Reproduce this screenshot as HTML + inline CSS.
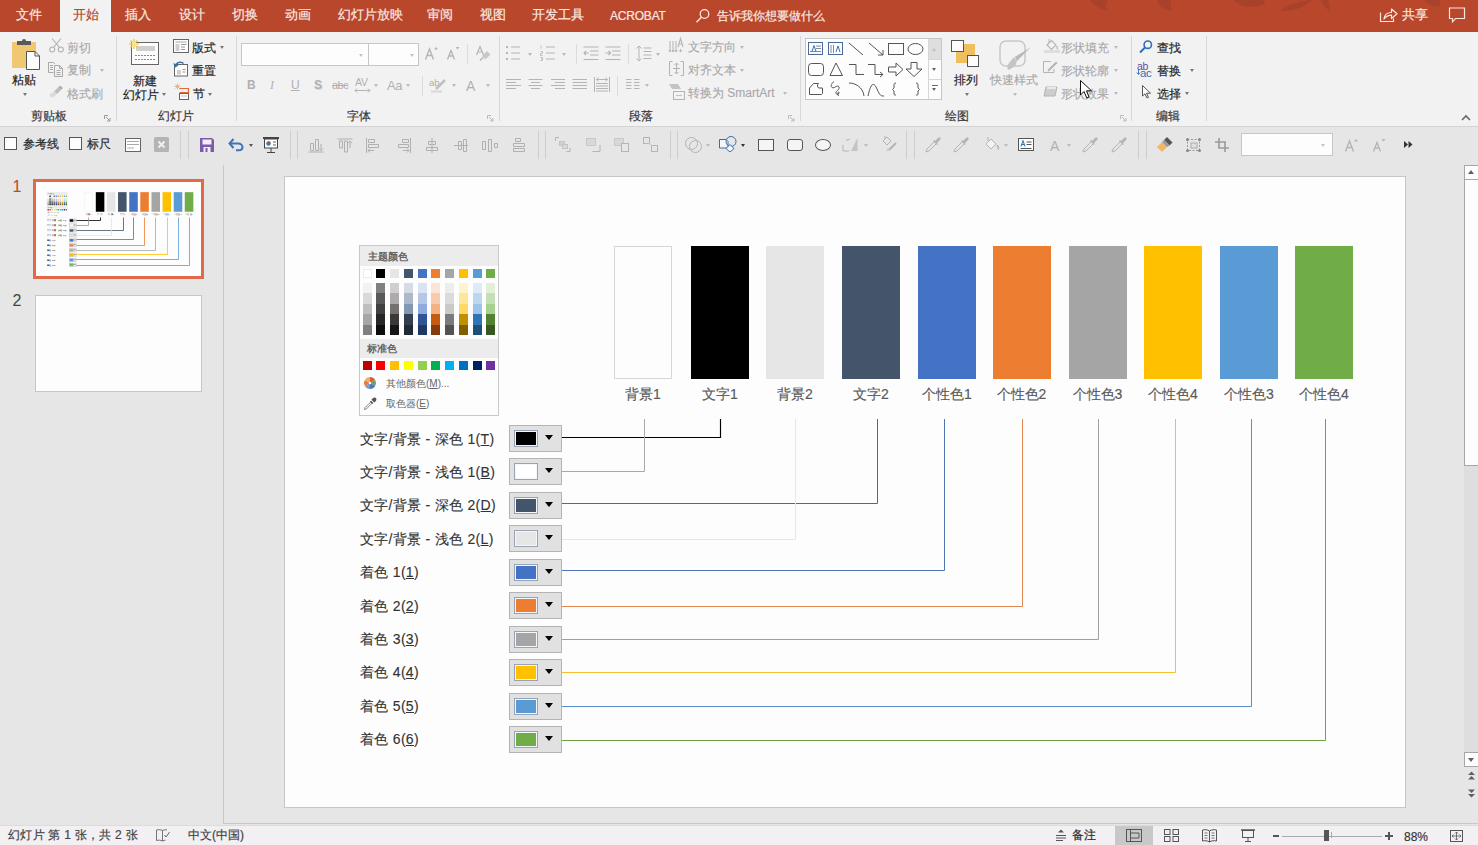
<!DOCTYPE html>
<html><head><meta charset="utf-8"><title>PowerPoint</title>
<style>
*{box-sizing:border-box;margin:0;padding:0}
html,body{width:1478px;height:845px;overflow:hidden;background:#e6e6e6;font-family:"Liberation Sans",sans-serif;color:#333}
.a{position:absolute}
.t{position:absolute;white-space:nowrap;line-height:1}
svg{position:absolute;overflow:visible}
.tab{position:absolute;top:8px;font-size:13px;color:#fbe7e1;line-height:14px;white-space:nowrap;-webkit-text-stroke:0.2px #fbe7e1}
.sep{position:absolute;width:1px;background:#d9d8d9}
.qsep{position:absolute;width:1px;background:#cfcfcf;top:131px;height:28px}
.lb{position:absolute;font-size:12px;color:#3a3a3a;line-height:1;white-space:nowrap;-webkit-text-stroke:0.2px #3a3a3a}
.rt{position:absolute;font-size:12px;color:#262626;line-height:1;white-space:nowrap;-webkit-text-stroke:0.2px #262626}
.dt{position:absolute;font-size:12px;color:#a8a8a8;line-height:1;white-space:nowrap;-webkit-text-stroke:0.15px #a8a8a8}
.dd{position:absolute;width:0;height:0;border-left:2.5px solid transparent;border-right:2.5px solid transparent;border-top:3px solid #777}
.ddg{position:absolute;width:0;height:0;border-left:2.5px solid transparent;border-right:2.5px solid transparent;border-top:3px solid #bbb}
</style></head><body>
<div class="a" style="left:0;top:0;width:1478px;height:32px;background:#b8472b"></div>
<svg style="left:1080px;top:0" width="380" height="32" viewBox="0 0 380 32">
<g fill="#a8422a">
<path d="M10 0 C14 5 20 9 28 11 C24 6 26 3 28 0Z"/>
<path d="M77 0 C78 5 82 9 92 11 C90 6 92 2 90 0Z"/>
<path d="M154 0 C158 6 170 9 185 4 L184 0Z"/>
<path d="M200 11 C210 3 222 1 232 0 C226 6 214 12 200 11Z"/>
<path d="M241 0 C243 5 247 9 250 12 C250 7 249 3 248 0Z"/>
<path d="M344 0 C350 6 356 8 360 6 L360 0Z"/>
</g></svg>
<div class="a" style="left:60px;top:0;width:51px;height:33px;background:#f3f2f3"></div>
<div class="tab" style="left:73px;color:#b5462a;-webkit-text-stroke-color:#b5462a">开始</div>
<div class="tab" style="left:16px">文件</div>
<div class="tab" style="left:125px">插入</div>
<div class="tab" style="left:179px">设计</div>
<div class="tab" style="left:232px">切换</div>
<div class="tab" style="left:285px">动画</div>
<div class="tab" style="left:338px">幻灯片放映</div>
<div class="tab" style="left:427px">审阅</div>
<div class="tab" style="left:480px">视图</div>
<div class="tab" style="left:532px">开发工具</div>
<div class="tab" style="left:610px;font-size:12px;top:9px;letter-spacing:-0.2px">ACROBAT</div>
<svg style="left:695px;top:8px" width="16" height="16" viewBox="0 0 16 16"><circle cx="9.5" cy="6" r="4.3" fill="none" stroke="#fbe7e1" stroke-width="1.3"/><path d="M6.6 9 L1.5 14.2" stroke="#fbe7e1" stroke-width="1.4"/></svg>
<div class="tab" style="left:717px;top:9px;font-size:12px">告诉我你想要做什么</div>
<svg style="left:1379px;top:6px" width="20" height="18" viewBox="0 0 20 18"><path d="M1.5 6.5 V15.5 H14.5 V12.5" fill="none" stroke="#fbe7e1" stroke-width="1.2"/><path d="M5 13 C5.5 8.5 8.5 6.5 12.5 6.5 V3 L18 7.8 L12.5 12.5 V9.2 C9.5 9.2 7 10.5 5 13Z" fill="none" stroke="#fbe7e1" stroke-width="1.2" stroke-linejoin="round"/></svg>
<div class="tab" style="left:1402px">共享</div>
<svg style="left:1448px;top:7px" width="18" height="17" viewBox="0 0 18 17"><path d="M1.5 1 H16.5 V11.5 H7.5 L4.5 14.8 V11.5 H1.5 Z" fill="none" stroke="#fbe7e1" stroke-width="1.2"/></svg>

<div class="a" style="left:0;top:32px;width:1478px;height:94px;background:#f3f2f3"></div>
<div class="a" style="left:0;top:126px;width:1478px;height:1px;background:#d4d4d4"></div>
<!-- separators -->
<div class="sep" style="left:116px;top:36px;height:85px"></div>
<div class="sep" style="left:236px;top:36px;height:85px"></div>
<div class="sep" style="left:499px;top:36px;height:85px"></div>
<div class="sep" style="left:800px;top:36px;height:85px"></div>
<div class="sep" style="left:1131px;top:36px;height:85px"></div>
<div class="sep" style="left:1206px;top:36px;height:85px"></div>
<!-- launchers -->
<svg style="left:104px;top:115px" width="7" height="7" viewBox="0 0 7 7"><path d="M0.5 0.5 H4 M0.5 0.5 V4 M2 2 L6 6 M6 3 V6 H3" fill="none" stroke="#999" stroke-width="1"/></svg>
<svg style="left:487px;top:115px" width="7" height="7" viewBox="0 0 7 7"><path d="M0.5 0.5 H4 M0.5 0.5 V4 M2 2 L6 6 M6 3 V6 H3" fill="none" stroke="#bbb" stroke-width="1"/></svg>
<svg style="left:788px;top:115px" width="7" height="7" viewBox="0 0 7 7"><path d="M0.5 0.5 H4 M0.5 0.5 V4 M2 2 L6 6 M6 3 V6 H3" fill="none" stroke="#bbb" stroke-width="1"/></svg>
<svg style="left:1120px;top:115px" width="7" height="7" viewBox="0 0 7 7"><path d="M0.5 0.5 H4 M0.5 0.5 V4 M2 2 L6 6 M6 3 V6 H3" fill="none" stroke="#bbb" stroke-width="1"/></svg>
<!-- group labels -->
<div class="lb" style="left:31px;top:110px">剪贴板</div>
<div class="lb" style="left:158px;top:110px">幻灯片</div>
<div class="lb" style="left:347px;top:110px">字体</div>
<div class="lb" style="left:629px;top:110px">段落</div>
<div class="lb" style="left:945px;top:110px">绘图</div>
<div class="lb" style="left:1156px;top:110px">编辑</div>
<svg style="left:1461px;top:114px" width="10" height="7" viewBox="0 0 10 7"><path d="M1 6 L5 2 L9 6" fill="none" stroke="#666" stroke-width="1.6"/></svg>

<!-- CLIPBOARD -->
<svg style="left:12px;top:39px" width="28" height="32" viewBox="0 0 28 32">
<rect x="0" y="3" width="24" height="26" fill="#f0c872"/>
<path d="M5 2 H19 V6 H5 Z" fill="#5a5a5a"/><circle cx="12" cy="2" r="2" fill="#5a5a5a"/>
<path d="M14.5 12.5 H23 L27.5 17 V30.5 H14.5 Z" fill="#fdfdfd" stroke="#555" stroke-width="1"/>
<path d="M23 12.5 V17 H27.5" fill="none" stroke="#555" stroke-width="1"/>
</svg>
<div class="rt" style="left:12px;top:74px;color:#222">粘贴</div>
<div class="dd" style="left:23px;top:93px"></div>
<svg style="left:49px;top:38px" width="15" height="15" viewBox="0 0 15 15"><g fill="none" stroke="#b0b0b0" stroke-width="1.1"><circle cx="3.2" cy="11.5" r="2.5"/><circle cx="11.8" cy="11.5" r="2.5"/><path d="M4.5 9.5 L12 0.5 M10.5 9.5 L3 0.5"/></g></svg>
<div class="dt" style="left:67px;top:42px">剪切</div>
<svg style="left:48px;top:62px" width="16" height="15" viewBox="0 0 16 15"><g fill="none" stroke="#a8a8a8" stroke-width="1"><path d="M0.5 0.5 H5.5 L7 2 M0.5 0.5 V10.5 H5.5"/><path d="M2 3.5 H5 M2 5.5 H5 M2 7.5 H5"/><path d="M6.5 3.5 H11.5 L14.5 6.5 V14.5 H6.5 Z"/><path d="M11.5 3.5 V6.5 H14.5 M8.5 8.5 H12.5 M8.5 10.5 H12.5 M8.5 12.5 H12.5"/></g></svg>
<div class="dt" style="left:67px;top:64px">复制</div>
<div class="ddg" style="left:100px;top:69px"></div>
<svg style="left:49px;top:85px" width="15" height="13" viewBox="0 0 15 13"><path d="M11 0.5 L14 3 L12 5 L9 2.5 Z" fill="#b0b0b0"/><path d="M9 2.5 L12 5 L8 9 L5 6.5 Z" fill="#bdbdbd"/><path d="M5 6.5 L8 9 L4 12.5 C2 12.5 0.5 11 0.5 9.5 Z" fill="#dadada"/></svg>
<div class="dt" style="left:67px;top:88px">格式刷</div>

<!-- SLIDES -->
<svg style="left:128px;top:38px" width="33" height="28" viewBox="0 0 33 28">
<rect x="3.5" y="4.5" width="27" height="22" fill="#fdfdfd" stroke="#666" stroke-width="1"/>
<rect x="8" y="8" width="19" height="5" fill="#d0d0d0"/>
<path d="M7 17.5 H27 M7 21.5 H27" stroke="#888" stroke-width="1" stroke-dasharray="2 1"/>
<g stroke="#f0c040" stroke-width="1.2"><path d="M6 1 V11 M1 6 H11 M2.5 2.5 L9.5 9.5 M9.5 2.5 L2.5 9.5"/></g>
<circle cx="6" cy="6" r="2.5" fill="#fbe38a"/>
</svg>
<div class="rt" style="left:133px;top:75px">新建</div>
<div class="rt" style="left:123px;top:89px">幻灯片</div>
<div class="dd" style="left:162px;top:93px"></div>
<svg style="left:173px;top:39px" width="17" height="14" viewBox="0 0 17 14"><rect x="0.5" y="0.5" width="15" height="13" fill="#fdfdfd" stroke="#666"/><path d="M2.5 3 H13.5" stroke="#c4c4c4" stroke-width="1.5"/><rect x="2.5" y="5" width="4" height="7" fill="#cfcfcf"/><path d="M8 5.5 H13.5 M8 8 H12 M8 10.5 H12" stroke="#999"/></svg>
<div class="rt" style="left:192px;top:42px">版式</div>
<div class="dd" style="left:220px;top:46px"></div>
<svg style="left:173px;top:61px" width="17" height="16" viewBox="0 0 17 16"><rect x="1.5" y="3.5" width="13" height="11.5" fill="#fdfdfd" stroke="#666"/><rect x="4" y="9" width="4" height="4.5" fill="#cfcfcf"/><path d="M9.5 8.5 H12.5 M9.5 11 H12.5" stroke="#999"/><path d="M10.5 2.5 C8.5 0.5 5 0.8 3 3.5" fill="none" stroke="#3a6ea8" stroke-width="1.6"/><path d="M0.5 2 L1.5 7 L5.5 4.5 Z" fill="#3a6ea8"/></svg>
<div class="rt" style="left:192px;top:65px">重置</div>
<svg style="left:174px;top:83px" width="16" height="17" viewBox="0 0 16 17"><path d="M3.5 0.5 V6.5 M0.5 3.5 H6.5 M1.5 1.5 L5.5 5.5 M5.5 1.5 L1.5 5.5" stroke="#f0b070" stroke-width="0.9"/><path d="M5.5 5.5 H14.5 V9.5 H5.5" fill="none" stroke="#e06a38" stroke-width="1.2"/><rect x="5.5" y="10.5" width="9" height="6" fill="#fdfdfd" stroke="#666"/><path d="M7 13 H13" stroke="#c8c8c8"/></svg>
<div class="rt" style="left:193px;top:88px">节</div>
<div class="dd" style="left:208px;top:93px"></div>

<!-- FONT -->
<div class="a" style="left:241px;top:43px;width:128px;height:23px;background:#fdfdfd;border:1px solid #c6c6c6"></div>
<div class="a" style="left:368px;top:43px;width:51px;height:23px;background:#fdfdfd;border:1px solid #c6c6c6"></div>
<div class="ddg" style="left:359px;top:54px;border-top-color:#c4c4c4"></div>
<div class="ddg" style="left:410px;top:54px;border-top-color:#c4c4c4"></div>
<svg style="left:425px;top:46px" width="14" height="14" viewBox="0 0 14 14"><path d="M0.5 13.5 L4.5 3 L8.5 13.5 M2 9.5 H7" fill="none" stroke="#b4b4b4" stroke-width="1.4"/><path d="M9 3.5 L11 1 L13 3.5 Z" fill="#b4b4b4"/></svg>
<svg style="left:447px;top:46px" width="14" height="14" viewBox="0 0 14 14"><path d="M0.5 13.5 L4 4.5 L7.5 13.5 M2 10 H6" fill="none" stroke="#b4b4b4" stroke-width="1.3"/><path d="M8.5 1 L12.5 1 L10.5 3.5 Z" fill="#b4b4b4"/></svg>
<div class="sep" style="left:467px;top:44px;height:20px;background:#dcdcdc"></div>
<svg style="left:476px;top:46px" width="15" height="15" viewBox="0 0 15 15"><path d="M0.5 9 L4 0.5 L7.5 9 M1.8 6 H6.2" fill="none" stroke="#b4b4b4" stroke-width="1.2"/><path d="M6 10 L11 5 L14.5 8.5 L9.5 13.5 Z" fill="#c8c8c8"/><path d="M4 14.5 L7 11.5" stroke="#b4b4b4" stroke-width="1.5"/></svg>
<div class="t" style="left:247px;top:79px;font-size:12px;font-weight:bold;color:#b0b0b0">B</div>
<div class="t" style="left:270px;top:79px;font-size:12px;font-style:italic;color:#b0b0b0;font-family:'Liberation Serif',serif">I</div>
<div class="t" style="left:291px;top:79px;font-size:12px;color:#b0b0b0;text-decoration:underline">U</div>
<div class="t" style="left:314px;top:79px;font-size:12px;font-weight:bold;color:#b0b0b0;text-shadow:1px 1px 0 #d8d8d8">S</div>
<div class="t" style="left:332px;top:80px;font-size:11px;color:#b0b0b0;text-decoration:line-through;letter-spacing:-0.5px">abc</div>
<div class="t" style="left:355px;top:77px;font-size:10.5px;color:#b0b0b0;letter-spacing:-0.3px">AV</div>
<svg style="left:354px;top:88px" width="17" height="5" viewBox="0 0 17 5"><path d="M1 2.5 H16 M3 0.5 L1 2.5 L3 4.5 M14 0.5 L16 2.5 L14 4.5" fill="none" stroke="#b4b4b4" stroke-width="1"/></svg>
<div class="ddg" style="left:374px;top:84px"></div>
<div class="t" style="left:387px;top:79px;font-size:13px;color:#b0b0b0;letter-spacing:-0.3px">Aa</div>
<div class="ddg" style="left:406px;top:84px"></div>
<div class="sep" style="left:422px;top:76px;height:20px;background:#dcdcdc"></div>
<div class="t" style="left:429px;top:78px;font-size:9.5px;color:#b0b0b0">ab</div>
<svg style="left:430px;top:77px" width="17" height="16" viewBox="0 0 17 16"><path d="M6 12 L15 3" stroke="#c0c0c0" stroke-width="2.5"/><path d="M1 14.5 H12" stroke="#d8d8d8" stroke-width="2"/></svg>
<div class="ddg" style="left:452px;top:84px"></div>
<div class="t" style="left:466px;top:79px;font-size:14px;color:#b0b0b0">A</div>
<div class="ddg" style="left:486px;top:84px"></div>

<!-- PARAGRAPH -->
<svg style="left:506px;top:45px" width="16" height="16" viewBox="0 0 16 16"><g fill="#b4b4b4"><rect x="0" y="1" width="2" height="2"/><rect x="0" y="7" width="2" height="2"/><rect x="0" y="13" width="2" height="2"/></g><path d="M5 2 H14 M5 8 H14 M5 14 H14" stroke="#b4b4b4" stroke-width="1"/></svg>
<div class="ddg" style="left:528px;top:53px"></div>
<svg style="left:540px;top:45px" width="16" height="16" viewBox="0 0 16 16"><path d="M6 2 H15 M6 8 H15 M6 14 H15" stroke="#b4b4b4" stroke-width="1"/><path d="M1 0.5 V3.5 M0.5 6.5 H2.5 V8.5 H0.5 V10.5 H2.5 M0.5 12.5 H2.5 V15.5 H0.5 M1 14 H2.5" fill="none" stroke="#b4b4b4" stroke-width="0.8"/></svg>
<div class="ddg" style="left:562px;top:53px"></div>
<div class="sep" style="left:576px;top:44px;height:20px;background:#dcdcdc"></div>
<svg style="left:583px;top:46px" width="16" height="15" viewBox="0 0 16 15"><path d="M0.5 1 H15.5 M7 5 H15.5 M7 9 H15.5 M0.5 13.5 H15.5 M1 7 H6 M3 5 L1 7 L3 9" fill="none" stroke="#b4b4b4" stroke-width="1.1"/></svg>
<svg style="left:605px;top:46px" width="16" height="15" viewBox="0 0 16 15"><path d="M0.5 1 H15.5 M7 5 H15.5 M7 9 H15.5 M0.5 13.5 H15.5 M0.5 7 H5.5 M3.5 5 L5.5 7 L3.5 9" fill="none" stroke="#b4b4b4" stroke-width="1.1"/></svg>
<div class="sep" style="left:628px;top:44px;height:20px;background:#dcdcdc"></div>
<svg style="left:636px;top:45px" width="16" height="17" viewBox="0 0 16 17"><path d="M3 1 V16 M0.5 3.5 L3 1 L5.5 3.5 M0.5 13.5 L3 16 L5.5 13.5 M7.5 3 H15.5 M7.5 6.5 H15.5 M7.5 10 H15.5 M7.5 13.5 H15.5" fill="none" stroke="#b4b4b4" stroke-width="1"/></svg>
<div class="ddg" style="left:656px;top:53px"></div>
<svg style="left:669px;top:38px" width="15" height="15" viewBox="0 0 15 15"><path d="M1 3 V14 M4 3 V14 M7 3 V14 M0 12 L1 14 L2 12 M3 12 L4 14 L5 12 M6 12 L7 14 L8 12" fill="none" stroke="#b4b4b4" stroke-width="1"/><path d="M9 9 L11.5 0.5 L14 9 M10 6 H13" fill="none" stroke="#b4b4b4" stroke-width="1.1"/><path d="M11.5 11 V14 M10 12.5 L11.5 14 L13 12.5" fill="none" stroke="#b4b4b4"/></svg>
<div class="dt" style="left:688px;top:41px">文字方向</div>
<div class="ddg" style="left:740px;top:46px"></div>
<svg style="left:669px;top:61px" width="15" height="15" viewBox="0 0 15 15"><path d="M3.5 0.5 H0.5 V14.5 H3.5 M11.5 0.5 H14.5 V14.5 H11.5 M7.5 2 V13 M5.5 4 L7.5 2 L9.5 4 M5.5 11 L7.5 13 L9.5 11 M4 7.5 H11" fill="none" stroke="#b4b4b4" stroke-width="1"/></svg>
<div class="dt" style="left:688px;top:64px">对齐文本</div>
<div class="ddg" style="left:740px;top:69px"></div>
<svg style="left:669px;top:84px" width="16" height="16" viewBox="0 0 16 16"><path d="M0 0 H9 L12 5 H3 Z" fill="#c4c4c4"/><rect x="4.5" y="7.5" width="11" height="8" fill="#f3f2f3" stroke="#b4b4b4"/><path d="M7 11.5 H13" stroke="#c4c4c4"/></svg>
<div class="dt" style="left:688px;top:87px">转换为 SmartArt</div>
<div class="ddg" style="left:783px;top:92px"></div>
<svg style="left:506px;top:79px" width="16" height="12" viewBox="0 0 16 12"><path d="M0 0.5 H15 M0 3.5 H10 M0 6.5 H15 M0 9.5 H10" stroke="#b4b4b4" stroke-width="1"/></svg>
<svg style="left:528px;top:79px" width="16" height="12" viewBox="0 0 16 12"><path d="M0.5 0.5 H14.5 M3 3.5 H12 M0.5 6.5 H14.5 M3 9.5 H12" stroke="#b4b4b4" stroke-width="1"/></svg>
<svg style="left:550px;top:79px" width="16" height="12" viewBox="0 0 16 12"><path d="M1 0.5 H15 M5 3.5 H15 M1 6.5 H15 M5 9.5 H15" stroke="#b4b4b4" stroke-width="1"/></svg>
<svg style="left:572px;top:79px" width="16" height="12" viewBox="0 0 16 12"><path d="M0.5 0.5 H15 M0.5 3.5 H15 M0.5 6.5 H15 M0.5 9.5 H15" stroke="#b4b4b4" stroke-width="1"/></svg>
<svg style="left:594px;top:77px" width="16" height="15" viewBox="0 0 16 15"><path d="M0.5 0 V15 M15.5 0 V15 M2.5 2.5 H13.5 M4.5 0.5 L2.5 2.5 L4.5 4.5 M11.5 0.5 L13.5 2.5 L11.5 4.5 M2 6.5 H14 M2 9 H14 M2 11.5 H14 M2 14 H14" fill="none" stroke="#b4b4b4" stroke-width="1"/></svg>
<div class="sep" style="left:617px;top:76px;height:20px;background:#dcdcdc"></div>
<svg style="left:626px;top:79px" width="14" height="12" viewBox="0 0 14 12"><path d="M0 0.5 H5.5 M0 3.5 H5.5 M0 6.5 H5.5 M0 9.5 H5.5 M8 0.5 H13.5 M8 3.5 H13.5 M8 6.5 H13.5 M8 9.5 H13.5" stroke="#b4b4b4" stroke-width="1"/></svg>
<div class="ddg" style="left:645px;top:84px"></div>

<!-- DRAWING -->
<div class="a" style="left:805px;top:38px;width:137px;height:62px;background:#fdfdfd;border:1px solid #c6c6c6"></div>
<div class="a" style="left:928px;top:39px;width:1px;height:60px;background:#d6d6d6"></div>
<div class="a" style="left:929px;top:39px;width:12px;height:20px;background:#dedede"></div>
<div class="a" style="left:929px;top:59px;width:12px;height:1px;background:#d6d6d6"></div>
<div class="a" style="left:929px;top:79px;width:12px;height:1px;background:#d6d6d6"></div>
<div class="a" style="left:932px;top:48px;width:0;height:0;border-left:2.5px solid transparent;border-right:2.5px solid transparent;border-bottom:3px solid #c0c0c0"></div>
<div class="dd" style="left:932px;top:68px;border-top-color:#666"></div>
<div class="a" style="left:932px;top:85px;width:6px;height:1px;background:#666"></div>
<div class="dd" style="left:932px;top:88px;border-top-color:#666"></div>
<svg style="left:808px;top:42px" width="118" height="55" viewBox="0 0 118 55">
<g fill="none" stroke="#555" stroke-width="1">
<rect x="0.5" y="0.5" width="14" height="12" stroke="#4a6a9a"/><path d="M8 4 H13 M8 6.5 H13 M2 9.5 H13" stroke="#7a8aa0"/>
<rect x="20.5" y="0.5" width="14" height="12" stroke="#4a6a9a"/><path d="M23 3 V11 M25.5 3 V11" stroke="#7a8aa0"/>
<path d="M41 1 L55 13"/>
<path d="M61 1 L75 13 M70 13 H75 V8"/>
<rect x="80.5" y="1.5" width="15" height="11"/>
<ellipse cx="107.5" cy="7" rx="7.5" ry="5.5"/>
<rect x="0.5" y="21.5" width="15" height="12" rx="3"/>
<path d="M22 33.5 L28 21 L34.5 33.5 Z"/>
<path d="M41 22.5 H48 V32.5 H56"/>
<path d="M60 22.5 H67 V32.5 H75 M72 30 L75 32.5 L72 35"/>
<path d="M80.5 25 H88 V21 L95 27.5 L88 34 V30 H80.5 Z"/>
<path d="M103 20.5 H109 V27 H114 L106 34.5 L98 27 H103 Z"/>
<path d="M1.5 52.5 V46 L5.5 41.5 H10.5 C9 43 9 45.5 11 46 H14.5 V51.5 L13.5 52.5 Z" stroke-linejoin="round"/>
<path d="M26 39.5 C24 41 22 44 24 45.5 C26 47 30 42 31 45 C32 48 27 49 28 51.5 C29 53 31.5 52 31 50.5 C30.5 49 29 51 30.5 54"/>
<path d="M41 41 C47 41 55 45 56 54"/>
<path d="M60 54 C63 40 66 40 69 47 C72 54 73 54 76 54"/>
<path d="M88 41 C86 41 86 42 86 44 V46 L84.5 47.5 L86 49 V51 C86 53 86 53 88 53"/>
<path d="M108 41 C110 41 110 42 110 44 V46 L111.5 47.5 L110 49 V51 C110 53 110 53 108 53"/>
</g>
<path d="M4 9.5 L6 3.5 L8 9.5" fill="none" stroke="#3a70b0" stroke-width="1"/>
<path d="M28 10 L30 4 L32 10" fill="none" stroke="#3a70b0" stroke-width="1"/>
</svg>
<svg style="left:951px;top:40px" width="29" height="28" viewBox="0 0 29 28"><rect x="5" y="4" width="19" height="19" fill="#f0c060"/><rect x="0.5" y="0.5" width="12" height="11" fill="#fdfdfd" stroke="#555"/><rect x="16.5" y="15.5" width="11" height="11" fill="#fdfdfd" stroke="#555"/></svg>
<div class="rt" style="left:954px;top:74px">排列</div>
<div class="dd" style="left:965px;top:93px"></div>
<svg style="left:999px;top:40px" width="33" height="32" viewBox="0 0 33 32"><rect x="1" y="1" width="25" height="25" rx="6" fill="none" stroke="#c8c8c8" stroke-width="1.5"/><path d="M31.5 7.5 L18 21 L14 18 Z" fill="#b8b8b8"/><path d="M18 21 L14 18 L10 23 C8 25 8 28 9 30 C12 29 15 27 16.5 25 Z" fill="#c4c4c4"/><path d="M17 19 L15.5 17.5" stroke="#e0e0e0" stroke-width="1.5"/></svg>
<div class="dt" style="left:990px;top:74px">快速样式</div>
<div class="ddg" style="left:1013px;top:93px"></div>
<svg style="left:1044px;top:38px" width="16" height="15" viewBox="0 0 16 15"><path d="M3 7 L7.5 2.5 L12 7 L7.5 11.5 Z" fill="none" stroke="#b4b4b4" stroke-width="1.1"/><path d="M5 1 V5" stroke="#b4b4b4"/><path d="M12.5 8 C13.5 9.5 14 10.5 13 11.5" stroke="#c4c4c4" stroke-width="1.5" fill="none"/><path d="M0 13.5 H16" stroke="#dedede" stroke-width="3"/></svg>
<div class="dt" style="left:1061px;top:42px">形状填充</div>
<div class="ddg" style="left:1114px;top:46px"></div>
<svg style="left:1043px;top:61px" width="15" height="12" viewBox="0 0 15 12"><path d="M8 0.5 H0.5 V11.5 H11 V8" fill="none" stroke="#b4b4b4" stroke-width="1"/><path d="M13.5 1 L6 8.5 L5 10 L6.5 9 L14 1.5" fill="none" stroke="#b4b4b4" stroke-width="1.3"/></svg>
<div class="dt" style="left:1061px;top:65px">形状轮廓</div>
<div class="ddg" style="left:1114px;top:69px"></div>
<svg style="left:1043px;top:86px" width="15" height="12" viewBox="0 0 15 12"><path d="M3 1 H14 L12 10 H1 Z" fill="#cdcdcd" stroke="#b4b4b4" stroke-linejoin="round"/><path d="M4 2 H13" stroke="#e8e8e8" stroke-width="2"/></svg>
<div class="dt" style="left:1061px;top:88px">形状效果</div>
<div class="ddg" style="left:1114px;top:92px"></div>
<svg style="left:1080px;top:80px" width="13" height="19" viewBox="0 0 13 19"><path d="M0.5 0.5 V15 L4 11.5 L6.8 18 L9 17 L6.5 10.8 H11.5 Z" fill="#fff" stroke="#111" stroke-width="1" stroke-linejoin="round"/></svg>

<!-- EDITING -->
<svg style="left:1139px;top:40px" width="14" height="13" viewBox="0 0 14 13"><circle cx="8.8" cy="4.7" r="3.7" fill="none" stroke="#2f6db5" stroke-width="1.6"/><path d="M6 7.5 L1 12.5" stroke="#2f6db5" stroke-width="2"/></svg>
<div class="rt" style="left:1157px;top:42px">查找</div>
<div class="t" style="left:1137px;top:61px;font-size:10.5px;color:#6a4c9c;letter-spacing:-0.3px">ab</div>
<div class="t" style="left:1140px;top:68px;font-size:11.5px;color:#3a6db0;letter-spacing:-0.3px">ac</div>
<svg style="left:1136px;top:69px" width="5" height="7" viewBox="0 0 5 7"><path d="M2.5 0 V5 M0.8 3.5 L2.5 5.5 L4.2 3.5" fill="none" stroke="#3a6db0" stroke-width="0.9"/></svg>
<div class="rt" style="left:1157px;top:65px">替换</div>
<div class="dd" style="left:1190px;top:69px"></div>
<svg style="left:1142px;top:85px" width="10" height="14" viewBox="0 0 10 14"><path d="M0.5 0.5 V11 L3 8.8 L5 13 L6.5 12.3 L4.5 8.2 H8.5 Z" fill="#fdfdfd" stroke="#444" stroke-width="0.9" stroke-linejoin="round"/></svg>
<div class="rt" style="left:1157px;top:88px">选择</div>
<div class="dd" style="left:1185px;top:92px"></div>

<div class="a" style="left:0;top:127px;width:1478px;height:36px;background:#e6e6e6"></div>
<div class="a" style="left:4px;top:137px;width:13px;height:13px;background:#fdfdfd;border:1px solid #555"></div>
<div class="rt" style="left:23px;top:138px">参考线</div>
<div class="a" style="left:69px;top:137px;width:13px;height:13px;background:#fdfdfd;border:1px solid #555"></div>
<div class="rt" style="left:87px;top:138px">标尺</div>
<svg style="left:125px;top:138px" width="16" height="14" viewBox="0 0 16 14"><rect x="0.5" y="0.5" width="15" height="13" fill="#fdfdfd" stroke="#666"/><path d="M2.5 3.5 H13.5 M2.5 6.5 H13.5" stroke="#555" stroke-dasharray="1 1"/><path d="M2.5 10 H9" stroke="#6a8ab8" stroke-dasharray="1 0.5"/></svg>
<svg style="left:154px;top:137px" width="15" height="15" viewBox="0 0 15 15"><rect x="0" y="0" width="15" height="15" rx="1.5" fill="#b4b4b4"/><path d="M4.5 4.5 L10.5 10.5 M10.5 4.5 L4.5 10.5" stroke="#f0f0f0" stroke-width="2"/></svg>
<div class="qsep" style="left:180px"></div><div class="qsep" style="left:188px"></div>
<svg style="left:200px;top:138px" width="14" height="14" viewBox="0 0 14 14"><path d="M0 0 H12 L14 2 V14 H0 Z" fill="#7b5ca8"/><rect x="2.5" y="1.5" width="9" height="5" fill="#f3eefa"/><rect x="3.5" y="9" width="7" height="5" fill="#f3eefa"/><rect x="5.5" y="10" width="2" height="4" fill="#7b5ca8"/></svg>
<svg style="left:228px;top:137px" width="16" height="14" viewBox="0 0 16 14"><path d="M2 6.5 H10 C13 6.5 14.5 8.5 14.5 10 C14.5 12 13 13.3 10.5 13.3 H8" fill="none" stroke="#3a76b6" stroke-width="2"/><path d="M5.5 2 L1.5 6.5 L5.5 11" fill="none" stroke="#3a76b6" stroke-width="2"/></svg>
<div class="dd" style="left:249px;top:144px;border-top-color:#555"></div>
<svg style="left:263px;top:137px" width="16" height="16" viewBox="0 0 16 16"><path d="M0 1 H16" stroke="#444" stroke-width="2"/><rect x="1.5" y="2" width="13" height="9" fill="#fdfdfd" stroke="#444"/><path d="M8 11 V15 M4 15.5 H12" stroke="#444"/><circle cx="5.5" cy="6.5" r="2.2" fill="#4a6fb0"/><path d="M5.5 6.5 V4.3 A2.2 2.2 0 0 1 7.7 6.5 Z" fill="#c0504d"/><path d="M10 5 H13 M10 8 H13" stroke="#666"/></svg>
<div class="qsep" style="left:290px"></div><div class="qsep" style="left:297px"></div>
<svg style="left:308px;top:138px" width="250" height="15" viewBox="0 0 250 15"><g fill="none" stroke="#b0b0b0" stroke-width="1">
<path d="M0.5 14 H15.5 M2.5 5.5 H5.5 V12.5 H2.5 Z M7.5 1.5 H10.5 V12.5 H7.5 Z M13 6 V12.5 M11 10.5 L13 12.5 L15 10.5"/>
<path d="M29.5 1 H44.5 M31.5 3 H34.5 V10 H31.5 Z M36.5 3 H39.5 V14 H36.5 Z M42 3 V10 M40 5 L42 3 L44 5"/>
<path d="M58.5 0 V15 M60.5 1.5 H66.5 V4.5 H60.5 Z M60.5 6.5 H70.5 V9.5 H60.5 Z M60 12.5 H66 M62 10.5 L60 12.5 L62 14.5"/>
<path d="M102.5 0 V15 M94.5 1.5 H100.5 V4.5 H94.5 Z M90.5 6.5 H100.5 V9.5 H90.5 Z M95 12.5 H101 M99 10.5 L101 12.5 L99 14.5"/>
<path d="M124 0 V15 M120.5 3.5 H127.5 V6.5 H120.5 Z M118.5 9.5 H129.5 V12.5 H118.5 Z"/>
<path d="M146 7.5 H160 M150.5 3.5 H153.5 V11.5 H150.5 Z M155.5 1.5 H158.5 V13.5 H155.5 Z"/>
<path d="M174.5 3.5 H177.5 V11.5 H174.5 Z M180.5 1.5 H183.5 V13.5 H180.5 Z M186.5 5.5 H189.5 V9.5 H186.5 Z"/>
<path d="M207.5 0.5 H212.5 V3.5 H207.5 Z M205.5 5.5 H216.5 V8.5 H205.5 Z M205.5 10.5 H216.5 V13.5 H205.5 Z"/>
</g></svg>
<div class="qsep" style="left:538px"></div><div class="qsep" style="left:545px"></div>
<svg style="left:555px;top:137px" width="105" height="15" viewBox="0 0 105 15"><g fill="none" stroke="#b4b4b4" stroke-width="1">
<path d="M0.5 4 V0.5 H4 M15 11 V14.5 H11.5"/><rect x="4.5" y="4.5" width="5" height="4" fill="#d0d0d0" stroke="#c4c4c4"/><rect x="7.5" y="7.5" width="5" height="4" fill="#d8d8d8" stroke="#c4c4c4"/>
<rect x="31.5" y="1.5" width="9" height="7" fill="#d8d8d8" stroke="#c8c8c8"/><path d="M45 8 V14.5 H37.5"/>
<rect x="59.5" y="1.5" width="9" height="7" fill="#d8d8d8" stroke="#c8c8c8"/><rect x="66.5" y="6.5" width="7" height="8" fill="#e6e6e6"/>
<rect x="88.5" y="0.5" width="6" height="6"/><rect x="96.5" y="8.5" width="6" height="6"/><path d="M93 6 L98 9" stroke="#c8c8c8"/>
</g></svg>
<div class="qsep" style="left:670px"></div><div class="qsep" style="left:677px"></div>
<svg style="left:685px;top:137px" width="17" height="16" viewBox="0 0 17 16"><circle cx="6.5" cy="6.5" r="6" fill="none" stroke="#b4b4b4"/><circle cx="10.5" cy="9.5" r="6" fill="none" stroke="#b4b4b4"/></svg>
<div class="ddg" style="left:706px;top:144px"></div>
<svg style="left:719px;top:136px" width="18" height="16" viewBox="0 0 18 16"><path d="M0.5 3.5 H7 L9 5.5 V12 H0.5 Z" fill="#f3f6fb" stroke="#3a6ea8"/><circle cx="12" cy="5.5" r="5" fill="none" stroke="#3a6ea8"/><path d="M11 8.5 L15 12.5 L11 16 L7 12.5 Z" fill="#f3f6fb" stroke="#3a6ea8"/></svg>
<div class="dd" style="left:741px;top:144px;border-top-color:#333"></div>
<div class="a" style="left:758px;top:139px;width:16px;height:12px;background:#f5f5f5;border:1px solid #555"></div>
<div class="a" style="left:787px;top:139px;width:16px;height:12px;background:#f5f5f5;border:1px solid #555;border-radius:3px"></div>
<div class="a" style="left:815px;top:139px;width:16px;height:12px;background:#f5f5f5;border:1px solid #555;border-radius:50%"></div>
<svg style="left:842px;top:137px" width="17" height="15" viewBox="0 0 17 15"><path d="M9 14 L15.5 14 L15.5 1 Z" fill="#c4c4c4"/><path d="M1 14 H7 M1 14 V8 M4 4 C5 2 7 2 8 3" fill="none" stroke="#b4b4b4"/></svg>
<div class="ddg" style="left:864px;top:144px"></div>
<svg style="left:880px;top:136px" width="17" height="17" viewBox="0 0 17 17"><path d="M3 5 L7 1 L11 5 L7 9 Z" fill="none" stroke="#b4b4b4"/><path d="M5 0 V3" stroke="#b4b4b4"/><path d="M16 7 L9 14" stroke="#b4b4b4" stroke-width="2"/><path d="M6 15 L8 12 L10 14 Z" fill="#c4c4c4"/></svg>
<div class="qsep" style="left:906px"></div><div class="qsep" style="left:914px"></div>
<svg style="left:925px;top:137px" width="16" height="16" viewBox="0 0 16 16"><path d="M1 15 L2 12 L9.5 4.5 L11.5 6.5 L4 14 Z" fill="none" stroke="#b4b4b4"/><path d="M8.5 3.5 L12.5 7.5 M10 5 L13.5 1.5 C14.5 0.5 15.5 1.5 14.5 2.5 L11 6" fill="#b4b4b4" stroke="#b4b4b4" stroke-width="1.5"/></svg>
<svg style="left:953px;top:137px" width="16" height="16" viewBox="0 0 16 16"><path d="M1 15 L2 12 L9.5 4.5 L11.5 6.5 L4 14 Z" fill="none" stroke="#b4b4b4"/><path d="M8.5 3.5 L12.5 7.5 M10 5 L13.5 1.5 C14.5 0.5 15.5 1.5 14.5 2.5 L11 6" fill="#b4b4b4" stroke="#b4b4b4" stroke-width="1.5"/></svg>
<svg style="left:984px;top:137px" width="16" height="15" viewBox="0 0 16 15"><path d="M2 7 L7 2 L12 7 L7 12 Z" fill="#f3f3f3" stroke="#b4b4b4"/><path d="M4 0 V4" stroke="#b4b4b4"/><path d="M13 8 C14.5 10 15 11 14 12.5" stroke="#b4b4b4" stroke-width="1.6" fill="none"/></svg>
<div class="ddg" style="left:1004px;top:144px"></div>
<svg style="left:1018px;top:138px" width="16" height="13" viewBox="0 0 16 13"><rect x="0.5" y="0.5" width="15" height="12" fill="#fdfdfd" stroke="#555"/><path d="M3 8.5 L5 2.5 L7 8.5 M3.8 6.5 H6.2" fill="none" stroke="#2f6db5"/><path d="M8.5 4 H13.5 M8.5 6.5 H13.5 M2.5 10.5 H13.5" stroke="#555"/></svg>
<div class="t" style="left:1050px;top:139px;font-size:14px;color:#b0b0b0">A</div>
<div class="ddg" style="left:1067px;top:144px"></div>
<svg style="left:1082px;top:137px" width="16" height="16" viewBox="0 0 16 16"><path d="M1 15 L2 12 L9.5 4.5 L11.5 6.5 L4 14 Z" fill="none" stroke="#b4b4b4"/><path d="M8.5 3.5 L12.5 7.5 M10 5 L13.5 1.5 C14.5 0.5 15.5 1.5 14.5 2.5 L11 6" fill="#b4b4b4" stroke="#b4b4b4" stroke-width="1.5"/></svg>
<svg style="left:1111px;top:137px" width="16" height="16" viewBox="0 0 16 16"><path d="M1 15 L2 12 L9.5 4.5 L11.5 6.5 L4 14 Z" fill="none" stroke="#b4b4b4"/><path d="M8.5 3.5 L12.5 7.5 M10 5 L13.5 1.5 C14.5 0.5 15.5 1.5 14.5 2.5 L11 6" fill="#b4b4b4" stroke="#b4b4b4" stroke-width="1.5"/></svg>
<div class="qsep" style="left:1138px"></div><div class="qsep" style="left:1146px"></div>
<svg style="left:1156px;top:137px" width="17" height="15" viewBox="0 0 17 15"><path d="M1 10 L6 5 L11 10 L6 15 Z" fill="#f0b860"/><path d="M8 3 L11 0 L16.5 5.5 L13.5 8.5 Z" fill="#555"/><path d="M6 5 L8 3 L13.5 8.5 L11 10 Z" fill="#999"/></svg>
<svg style="left:1185px;top:137px" width="17" height="16" viewBox="0 0 17 16"><rect x="2.5" y="2.5" width="12" height="11" fill="none" stroke="#999" stroke-dasharray="2 1.5"/><g fill="#888"><circle cx="2.5" cy="2.5" r="1.5"/><circle cx="14.5" cy="2.5" r="1.5"/><circle cx="2.5" cy="13.5" r="1.5"/><circle cx="14.5" cy="13.5" r="1.5"/></g><rect x="6" y="6" width="6" height="5" fill="#e0e0e0" stroke="#aaa"/></svg>
<svg style="left:1215px;top:138px" width="14" height="14" viewBox="0 0 14 14"><path d="M4 0 V10 H14 M0 4 H10 V14" fill="none" stroke="#9a9a9a" stroke-width="1.6"/></svg>
<div class="a" style="left:1241px;top:133px;width:92px;height:23px;background:#fdfdfd;border:1px solid #c6c6c6"></div>
<div class="ddg" style="left:1321px;top:144px;border-top-color:#c4c4c4"></div>
<svg style="left:1345px;top:138px" width="14" height="14" viewBox="0 0 14 14"><path d="M0.5 13.5 L4.5 3 L8.5 13.5 M2 9.5 H7" fill="none" stroke="#b4b4b4" stroke-width="1.4"/><path d="M9 3.5 L11 1 L13 3.5 Z" fill="#b4b4b4"/></svg>
<svg style="left:1373px;top:138px" width="14" height="14" viewBox="0 0 14 14"><path d="M0.5 13.5 L4 4.5 L7.5 13.5 M2 10 H6" fill="none" stroke="#b4b4b4" stroke-width="1.3"/><path d="M8.5 1 L12.5 1 L10.5 3.5 Z" fill="#b4b4b4"/></svg>
<svg style="left:1404px;top:141px" width="9" height="7" viewBox="0 0 9 7"><path d="M0 0 L4 3.5 L0 7 Z M4.5 0 L8.5 3.5 L4.5 7 Z" fill="#333"/></svg>


<div class="a" style="left:223px;top:165px;width:1px;height:659px;background:#c8c8c8"></div>
<div class="t" style="left:12.5px;top:178.5px;font-size:16px;color:#c0462a">1</div>
<div class="a" style="left:33px;top:179px;width:171px;height:100px;border:3px solid #e0694a;background:#fdfdfd"></div>
<div class="a" style="left:36px;top:182px;width:165px;height:94px;overflow:hidden">
<div class="a" style="left:0;top:0;width:1478px;height:845px;transform-origin:0 0;transform:scale(0.1473) translate(-285px,-177px)"><div class="a" style="left:359px;top:245px;width:140px;height:171px;background:#fdfdfd;border:1px solid #c8c8c8"></div>
<div class="a" style="left:360px;top:246px;width:138px;height:20px;background:#ececec"></div>
<div class="t" style="left:368px;top:252px;font-size:10px;color:#555;-webkit-text-stroke:0.3px #555">主题颜色</div>
<div class="a" style="left:362.5px;top:269px;width:9px;height:9px;background:#FFFFFF;border:1px solid #ededed;"></div>
<div class="a" style="left:362.5px;top:283.0px;width:9px;height:10.5px;background:#F2F2F2"></div>
<div class="a" style="left:362.5px;top:293.4px;width:9px;height:10.5px;background:#D9D9D9"></div>
<div class="a" style="left:362.5px;top:303.8px;width:9px;height:10.5px;background:#BFBFBF"></div>
<div class="a" style="left:362.5px;top:314.2px;width:9px;height:10.5px;background:#A6A6A6"></div>
<div class="a" style="left:362.5px;top:324.6px;width:9px;height:10.5px;background:#808080"></div>
<div class="a" style="left:376.2px;top:269px;width:9px;height:9px;background:#000000;"></div>
<div class="a" style="left:376.2px;top:283.0px;width:9px;height:10.5px;background:#808080"></div>
<div class="a" style="left:376.2px;top:293.4px;width:9px;height:10.5px;background:#595959"></div>
<div class="a" style="left:376.2px;top:303.8px;width:9px;height:10.5px;background:#404040"></div>
<div class="a" style="left:376.2px;top:314.2px;width:9px;height:10.5px;background:#262626"></div>
<div class="a" style="left:376.2px;top:324.6px;width:9px;height:10.5px;background:#0D0D0D"></div>
<div class="a" style="left:390.0px;top:269px;width:9px;height:9px;background:#E7E6E6;"></div>
<div class="a" style="left:390.0px;top:283.0px;width:9px;height:10.5px;background:#D0CECE"></div>
<div class="a" style="left:390.0px;top:293.4px;width:9px;height:10.5px;background:#AEABAB"></div>
<div class="a" style="left:390.0px;top:303.8px;width:9px;height:10.5px;background:#757171"></div>
<div class="a" style="left:390.0px;top:314.2px;width:9px;height:10.5px;background:#3B3838"></div>
<div class="a" style="left:390.0px;top:324.6px;width:9px;height:10.5px;background:#161616"></div>
<div class="a" style="left:403.8px;top:269px;width:9px;height:9px;background:#44546A;"></div>
<div class="a" style="left:403.8px;top:283.0px;width:9px;height:10.5px;background:#D6DCE5"></div>
<div class="a" style="left:403.8px;top:293.4px;width:9px;height:10.5px;background:#ADB9CA"></div>
<div class="a" style="left:403.8px;top:303.8px;width:9px;height:10.5px;background:#8497B0"></div>
<div class="a" style="left:403.8px;top:314.2px;width:9px;height:10.5px;background:#333F50"></div>
<div class="a" style="left:403.8px;top:324.6px;width:9px;height:10.5px;background:#222A35"></div>
<div class="a" style="left:417.5px;top:269px;width:9px;height:9px;background:#4472C4;"></div>
<div class="a" style="left:417.5px;top:283.0px;width:9px;height:10.5px;background:#DAE3F3"></div>
<div class="a" style="left:417.5px;top:293.4px;width:9px;height:10.5px;background:#B4C7E7"></div>
<div class="a" style="left:417.5px;top:303.8px;width:9px;height:10.5px;background:#8FAADC"></div>
<div class="a" style="left:417.5px;top:314.2px;width:9px;height:10.5px;background:#2F5597"></div>
<div class="a" style="left:417.5px;top:324.6px;width:9px;height:10.5px;background:#203864"></div>
<div class="a" style="left:431.2px;top:269px;width:9px;height:9px;background:#ED7D31;"></div>
<div class="a" style="left:431.2px;top:283.0px;width:9px;height:10.5px;background:#FBE5D6"></div>
<div class="a" style="left:431.2px;top:293.4px;width:9px;height:10.5px;background:#F8CBAD"></div>
<div class="a" style="left:431.2px;top:303.8px;width:9px;height:10.5px;background:#F4B183"></div>
<div class="a" style="left:431.2px;top:314.2px;width:9px;height:10.5px;background:#C55A11"></div>
<div class="a" style="left:431.2px;top:324.6px;width:9px;height:10.5px;background:#843C0C"></div>
<div class="a" style="left:445.0px;top:269px;width:9px;height:9px;background:#A5A5A5;"></div>
<div class="a" style="left:445.0px;top:283.0px;width:9px;height:10.5px;background:#EDEDED"></div>
<div class="a" style="left:445.0px;top:293.4px;width:9px;height:10.5px;background:#DBDBDB"></div>
<div class="a" style="left:445.0px;top:303.8px;width:9px;height:10.5px;background:#C9C9C9"></div>
<div class="a" style="left:445.0px;top:314.2px;width:9px;height:10.5px;background:#7B7B7B"></div>
<div class="a" style="left:445.0px;top:324.6px;width:9px;height:10.5px;background:#525252"></div>
<div class="a" style="left:458.8px;top:269px;width:9px;height:9px;background:#FFC000;"></div>
<div class="a" style="left:458.8px;top:283.0px;width:9px;height:10.5px;background:#FFF2CC"></div>
<div class="a" style="left:458.8px;top:293.4px;width:9px;height:10.5px;background:#FFE699"></div>
<div class="a" style="left:458.8px;top:303.8px;width:9px;height:10.5px;background:#FFD966"></div>
<div class="a" style="left:458.8px;top:314.2px;width:9px;height:10.5px;background:#BF9000"></div>
<div class="a" style="left:458.8px;top:324.6px;width:9px;height:10.5px;background:#7F6000"></div>
<div class="a" style="left:472.5px;top:269px;width:9px;height:9px;background:#5B9BD5;"></div>
<div class="a" style="left:472.5px;top:283.0px;width:9px;height:10.5px;background:#DEEBF7"></div>
<div class="a" style="left:472.5px;top:293.4px;width:9px;height:10.5px;background:#BDD7EE"></div>
<div class="a" style="left:472.5px;top:303.8px;width:9px;height:10.5px;background:#9DC3E6"></div>
<div class="a" style="left:472.5px;top:314.2px;width:9px;height:10.5px;background:#2E75B6"></div>
<div class="a" style="left:472.5px;top:324.6px;width:9px;height:10.5px;background:#1F4E79"></div>
<div class="a" style="left:486.2px;top:269px;width:9px;height:9px;background:#70AD47;"></div>
<div class="a" style="left:486.2px;top:283.0px;width:9px;height:10.5px;background:#E2F0D9"></div>
<div class="a" style="left:486.2px;top:293.4px;width:9px;height:10.5px;background:#C5E0B4"></div>
<div class="a" style="left:486.2px;top:303.8px;width:9px;height:10.5px;background:#A9D18E"></div>
<div class="a" style="left:486.2px;top:314.2px;width:9px;height:10.5px;background:#548235"></div>
<div class="a" style="left:486.2px;top:324.6px;width:9px;height:10.5px;background:#385723"></div>
<div class="a" style="left:360px;top:339px;width:138px;height:19px;background:#ececec"></div>
<div class="t" style="left:367px;top:344px;font-size:10px;color:#555;-webkit-text-stroke:0.3px #555">标准色</div>
<div class="a" style="left:362.5px;top:361px;width:9px;height:9px;background:#C00000"></div>
<div class="a" style="left:376.2px;top:361px;width:9px;height:9px;background:#FF0000"></div>
<div class="a" style="left:390.0px;top:361px;width:9px;height:9px;background:#FFC000"></div>
<div class="a" style="left:403.8px;top:361px;width:9px;height:9px;background:#FFFF00"></div>
<div class="a" style="left:417.5px;top:361px;width:9px;height:9px;background:#92D050"></div>
<div class="a" style="left:431.2px;top:361px;width:9px;height:9px;background:#00B050"></div>
<div class="a" style="left:445.0px;top:361px;width:9px;height:9px;background:#00B0F0"></div>
<div class="a" style="left:458.8px;top:361px;width:9px;height:9px;background:#0070C0"></div>
<div class="a" style="left:472.5px;top:361px;width:9px;height:9px;background:#002060"></div>
<div class="a" style="left:486.2px;top:361px;width:9px;height:9px;background:#7030A0"></div>
<svg style="left:364px;top:377px" width="12" height="12" viewBox="0 0 12 12">
<path d="M6 6 L6 0 A6 6 0 0 1 11.2 3Z" fill="#e05a3a"/><path d="M6 6 L11.2 3 A6 6 0 0 1 11.2 9Z" fill="#6aa060"/><path d="M6 6 L11.2 9 A6 6 0 0 1 6 12Z" fill="#4a78b8"/><path d="M6 6 L6 12 A6 6 0 0 1 0.8 9Z" fill="#7a9ac8"/><path d="M6 6 L0.8 9 A6 6 0 0 1 0.8 3Z" fill="#e87a40"/><path d="M6 6 L0.8 3 A6 6 0 0 1 6 0Z" fill="#f0b060"/><circle cx="6" cy="6" r="1.2" fill="#fff"/></svg>
<div class="t" style="left:386px;top:379px;font-size:10px;color:#666">其他颜色(<u>M</u>)...</div>
<svg style="left:364px;top:398px" width="12" height="12" viewBox="0 0 12 12"><path d="M0.5 11.5 L1.2 9.5 L7 3.7 L8.3 5 L2.5 10.8 Z" fill="none" stroke="#777" stroke-width="0.9"/><path d="M6.5 3.2 L8.8 5.5 M8 2 L10 0.5 C11 0 12 1 11.5 2 L10 4" fill="#555" stroke="#555" stroke-width="1.6"/></svg>
<div class="t" style="left:386px;top:399px;font-size:10px;color:#666">取色器(<u>E</u>)</div>
<div class="a" style="left:614px;top:245.5px;width:58px;height:133px;background:#FDFDFD;border:1px solid #d6d6d6;"></div>
<div class="t" style="left:593px;top:387px;width:100px;text-align:center;font-size:14px;color:#595959;-webkit-text-stroke:0.15px #595959">背景1</div>
<div class="a" style="left:691px;top:245.5px;width:58px;height:133px;background:#000000;"></div>
<div class="t" style="left:670px;top:387px;width:100px;text-align:center;font-size:14px;color:#595959;-webkit-text-stroke:0.15px #595959">文字1</div>
<div class="a" style="left:766px;top:245.5px;width:58px;height:133px;background:#E6E6E6;"></div>
<div class="t" style="left:745px;top:387px;width:100px;text-align:center;font-size:14px;color:#595959;-webkit-text-stroke:0.15px #595959">背景2</div>
<div class="a" style="left:842px;top:245.5px;width:58px;height:133px;background:#44546A;"></div>
<div class="t" style="left:821px;top:387px;width:100px;text-align:center;font-size:14px;color:#595959;-webkit-text-stroke:0.15px #595959">文字2</div>
<div class="a" style="left:918px;top:245.5px;width:58px;height:133px;background:#4472C4;"></div>
<div class="t" style="left:897px;top:387px;width:100px;text-align:center;font-size:14px;color:#595959;-webkit-text-stroke:0.15px #595959">个性色1</div>
<div class="a" style="left:992.5px;top:245.5px;width:58px;height:133px;background:#ED7D31;"></div>
<div class="t" style="left:971.5px;top:387px;width:100px;text-align:center;font-size:14px;color:#595959;-webkit-text-stroke:0.15px #595959">个性色2</div>
<div class="a" style="left:1068.5px;top:245.5px;width:58px;height:133px;background:#A5A5A5;"></div>
<div class="t" style="left:1047.5px;top:387px;width:100px;text-align:center;font-size:14px;color:#595959;-webkit-text-stroke:0.15px #595959">个性色3</div>
<div class="a" style="left:1144px;top:245.5px;width:58px;height:133px;background:#FFC000;"></div>
<div class="t" style="left:1123px;top:387px;width:100px;text-align:center;font-size:14px;color:#595959;-webkit-text-stroke:0.15px #595959">个性色4</div>
<div class="a" style="left:1220px;top:245.5px;width:58px;height:133px;background:#5B9BD5;"></div>
<div class="t" style="left:1199px;top:387px;width:100px;text-align:center;font-size:14px;color:#595959;-webkit-text-stroke:0.15px #595959">个性色3</div>
<div class="a" style="left:1295px;top:245.5px;width:58px;height:133px;background:#70AD47;"></div>
<div class="t" style="left:1274px;top:387px;width:100px;text-align:center;font-size:14px;color:#595959;-webkit-text-stroke:0.15px #595959">个性色4</div>
<div class="t" style="left:360px;top:431.5px;font-size:14px;color:#333;letter-spacing:0.3px;-webkit-text-stroke:0.12px #333">文字/背景 - 深色 1(<u>T</u>)</div>
<div class="a" style="left:509px;top:425.0px;width:53px;height:27px;background:#e1e1e1;border:1px solid #b4b4b4"></div>
<div class="a" style="left:514px;top:430.0px;width:24px;height:17px;background:#000000;border:1px solid #9aa3b3;box-shadow:inset 0 0 0 1px #f4f8fc"></div>
<div class="a" style="left:545px;top:435.0px;width:0;height:0;border-left:4.5px solid transparent;border-right:4.5px solid transparent;border-top:5px solid #000"></div>
<div class="t" style="left:360px;top:464.9px;font-size:14px;color:#333;letter-spacing:0.3px;-webkit-text-stroke:0.12px #333">文字/背景 - 浅色 1(<u>B</u>)</div>
<div class="a" style="left:509px;top:458.4px;width:53px;height:27px;background:#e1e1e1;border:1px solid #b4b4b4"></div>
<div class="a" style="left:514px;top:463.4px;width:24px;height:17px;background:#FFFFFF;border:1px solid #9aa3b3;box-shadow:inset 0 0 0 1px #f4f8fc"></div>
<div class="a" style="left:545px;top:468.4px;width:0;height:0;border-left:4.5px solid transparent;border-right:4.5px solid transparent;border-top:5px solid #000"></div>
<div class="t" style="left:360px;top:498.3px;font-size:14px;color:#333;letter-spacing:0.3px;-webkit-text-stroke:0.12px #333">文字/背景 - 深色 2(<u>D</u>)</div>
<div class="a" style="left:509px;top:491.9px;width:53px;height:27px;background:#e1e1e1;border:1px solid #b4b4b4"></div>
<div class="a" style="left:514px;top:496.9px;width:24px;height:17px;background:#44546A;border:1px solid #9aa3b3;box-shadow:inset 0 0 0 1px #f4f8fc"></div>
<div class="a" style="left:545px;top:501.9px;width:0;height:0;border-left:4.5px solid transparent;border-right:4.5px solid transparent;border-top:5px solid #000"></div>
<div class="t" style="left:360px;top:531.7px;font-size:14px;color:#333;letter-spacing:0.3px;-webkit-text-stroke:0.12px #333">文字/背景 - 浅色 2(<u>L</u>)</div>
<div class="a" style="left:509px;top:525.4px;width:53px;height:27px;background:#e1e1e1;border:1px solid #b4b4b4"></div>
<div class="a" style="left:514px;top:530.4px;width:24px;height:17px;background:#E7E6E6;border:1px solid #9aa3b3;box-shadow:inset 0 0 0 1px #f4f8fc"></div>
<div class="a" style="left:545px;top:535.4px;width:0;height:0;border-left:4.5px solid transparent;border-right:4.5px solid transparent;border-top:5px solid #000"></div>
<div class="t" style="left:360px;top:565.1px;font-size:14px;color:#333;letter-spacing:0.3px;-webkit-text-stroke:0.12px #333">着色 1(<u>1</u>)</div>
<div class="a" style="left:509px;top:558.8px;width:53px;height:27px;background:#e1e1e1;border:1px solid #b4b4b4"></div>
<div class="a" style="left:514px;top:563.8px;width:24px;height:17px;background:#4472C4;border:1px solid #9aa3b3;box-shadow:inset 0 0 0 1px #f4f8fc"></div>
<div class="a" style="left:545px;top:568.8px;width:0;height:0;border-left:4.5px solid transparent;border-right:4.5px solid transparent;border-top:5px solid #000"></div>
<div class="t" style="left:360px;top:598.5px;font-size:14px;color:#333;letter-spacing:0.3px;-webkit-text-stroke:0.12px #333">着色 2(<u>2</u>)</div>
<div class="a" style="left:509px;top:592.2px;width:53px;height:27px;background:#e1e1e1;border:1px solid #b4b4b4"></div>
<div class="a" style="left:514px;top:597.2px;width:24px;height:17px;background:#ED7D31;border:1px solid #9aa3b3;box-shadow:inset 0 0 0 1px #f4f8fc"></div>
<div class="a" style="left:545px;top:602.2px;width:0;height:0;border-left:4.5px solid transparent;border-right:4.5px solid transparent;border-top:5px solid #000"></div>
<div class="t" style="left:360px;top:631.9px;font-size:14px;color:#333;letter-spacing:0.3px;-webkit-text-stroke:0.12px #333">着色 3(<u>3</u>)</div>
<div class="a" style="left:509px;top:625.7px;width:53px;height:27px;background:#e1e1e1;border:1px solid #b4b4b4"></div>
<div class="a" style="left:514px;top:630.7px;width:24px;height:17px;background:#A5A5A5;border:1px solid #9aa3b3;box-shadow:inset 0 0 0 1px #f4f8fc"></div>
<div class="a" style="left:545px;top:635.7px;width:0;height:0;border-left:4.5px solid transparent;border-right:4.5px solid transparent;border-top:5px solid #000"></div>
<div class="t" style="left:360px;top:665.3px;font-size:14px;color:#333;letter-spacing:0.3px;-webkit-text-stroke:0.12px #333">着色 4(<u>4</u>)</div>
<div class="a" style="left:509px;top:659.2px;width:53px;height:27px;background:#e1e1e1;border:1px solid #b4b4b4"></div>
<div class="a" style="left:514px;top:664.2px;width:24px;height:17px;background:#FFC000;border:1px solid #9aa3b3;box-shadow:inset 0 0 0 1px #f4f8fc"></div>
<div class="a" style="left:545px;top:669.2px;width:0;height:0;border-left:4.5px solid transparent;border-right:4.5px solid transparent;border-top:5px solid #000"></div>
<div class="t" style="left:360px;top:698.7px;font-size:14px;color:#333;letter-spacing:0.3px;-webkit-text-stroke:0.12px #333">着色 5(<u>5</u>)</div>
<div class="a" style="left:509px;top:692.6px;width:53px;height:27px;background:#e1e1e1;border:1px solid #b4b4b4"></div>
<div class="a" style="left:514px;top:697.6px;width:24px;height:17px;background:#5B9BD5;border:1px solid #9aa3b3;box-shadow:inset 0 0 0 1px #f4f8fc"></div>
<div class="a" style="left:545px;top:702.6px;width:0;height:0;border-left:4.5px solid transparent;border-right:4.5px solid transparent;border-top:5px solid #000"></div>
<div class="t" style="left:360px;top:732.1px;font-size:14px;color:#333;letter-spacing:0.3px;-webkit-text-stroke:0.12px #333">着色 6(<u>6</u>)</div>
<div class="a" style="left:509px;top:726.0px;width:53px;height:27px;background:#e1e1e1;border:1px solid #b4b4b4"></div>
<div class="a" style="left:514px;top:731.0px;width:24px;height:17px;background:#70AD47;border:1px solid #9aa3b3;box-shadow:inset 0 0 0 1px #f4f8fc"></div>
<div class="a" style="left:545px;top:736.0px;width:0;height:0;border-left:4.5px solid transparent;border-right:4.5px solid transparent;border-top:5px solid #000"></div></div></div><svg style="left:0;top:0" width="1478" height="845" viewBox="0 0 1478 845">
<path d="M76.5 220.5 H100.5 V217.5" fill="none" stroke="#000000" stroke-width="1" stroke-opacity="0.8"/>
<path d="M76.5 225.5 H88.5 V217.5" fill="none" stroke="#999999" stroke-width="1" stroke-opacity="0.8"/>
<path d="M76.5 230.5 H123.5 V217.5" fill="none" stroke="#44546a" stroke-width="1" stroke-opacity="0.8"/>
<path d="M76.5 235.5 H111.5 V217.5" fill="none" stroke="#e4e4e4" stroke-width="1" stroke-opacity="0.8"/>
<path d="M76.5 239.5 H133.5 V217.5" fill="none" stroke="#4472c4" stroke-width="1" stroke-opacity="0.8"/>
<path d="M76.5 245.5 H144.5 V217.5" fill="none" stroke="#ed7d31" stroke-width="1" stroke-opacity="0.8"/>
<path d="M76.5 250.5 H155.5 V217.5" fill="none" stroke="#a5a5a5" stroke-width="1" stroke-opacity="0.8"/>
<path d="M76.5 254.5 H167.5 V217.5" fill="none" stroke="#ffc000" stroke-width="1" stroke-opacity="0.8"/>
<path d="M76.5 259.5 H178.5 V217.5" fill="none" stroke="#5b9bd5" stroke-width="1" stroke-opacity="0.8"/>
<path d="M76.5 265.5 H189.5 V217.5" fill="none" stroke="#70ad47" stroke-width="1" stroke-opacity="0.8"/>
</svg>
<div class="t" style="left:12.5px;top:292.5px;font-size:16px;color:#444">2</div>
<div class="a" style="left:35px;top:295px;width:167px;height:97px;border:1px solid #c6c6c6;background:#fdfdfd"></div>

<div class="a" style="left:284px;top:176px;width:1122px;height:632px;background:#fdfdfd;border:1px solid #c6c6c6"></div>
<div class="a" style="left:359px;top:245px;width:140px;height:171px;background:#fdfdfd;border:1px solid #c8c8c8"></div>
<div class="a" style="left:360px;top:246px;width:138px;height:20px;background:#ececec"></div>
<div class="t" style="left:368px;top:252px;font-size:10px;color:#555;-webkit-text-stroke:0.3px #555">主题颜色</div>
<div class="a" style="left:362.5px;top:269px;width:9px;height:9px;background:#FFFFFF;border:1px solid #ededed;"></div>
<div class="a" style="left:362.5px;top:283.0px;width:9px;height:10.5px;background:#F2F2F2"></div>
<div class="a" style="left:362.5px;top:293.4px;width:9px;height:10.5px;background:#D9D9D9"></div>
<div class="a" style="left:362.5px;top:303.8px;width:9px;height:10.5px;background:#BFBFBF"></div>
<div class="a" style="left:362.5px;top:314.2px;width:9px;height:10.5px;background:#A6A6A6"></div>
<div class="a" style="left:362.5px;top:324.6px;width:9px;height:10.5px;background:#808080"></div>
<div class="a" style="left:376.2px;top:269px;width:9px;height:9px;background:#000000;"></div>
<div class="a" style="left:376.2px;top:283.0px;width:9px;height:10.5px;background:#808080"></div>
<div class="a" style="left:376.2px;top:293.4px;width:9px;height:10.5px;background:#595959"></div>
<div class="a" style="left:376.2px;top:303.8px;width:9px;height:10.5px;background:#404040"></div>
<div class="a" style="left:376.2px;top:314.2px;width:9px;height:10.5px;background:#262626"></div>
<div class="a" style="left:376.2px;top:324.6px;width:9px;height:10.5px;background:#0D0D0D"></div>
<div class="a" style="left:390.0px;top:269px;width:9px;height:9px;background:#E7E6E6;"></div>
<div class="a" style="left:390.0px;top:283.0px;width:9px;height:10.5px;background:#D0CECE"></div>
<div class="a" style="left:390.0px;top:293.4px;width:9px;height:10.5px;background:#AEABAB"></div>
<div class="a" style="left:390.0px;top:303.8px;width:9px;height:10.5px;background:#757171"></div>
<div class="a" style="left:390.0px;top:314.2px;width:9px;height:10.5px;background:#3B3838"></div>
<div class="a" style="left:390.0px;top:324.6px;width:9px;height:10.5px;background:#161616"></div>
<div class="a" style="left:403.8px;top:269px;width:9px;height:9px;background:#44546A;"></div>
<div class="a" style="left:403.8px;top:283.0px;width:9px;height:10.5px;background:#D6DCE5"></div>
<div class="a" style="left:403.8px;top:293.4px;width:9px;height:10.5px;background:#ADB9CA"></div>
<div class="a" style="left:403.8px;top:303.8px;width:9px;height:10.5px;background:#8497B0"></div>
<div class="a" style="left:403.8px;top:314.2px;width:9px;height:10.5px;background:#333F50"></div>
<div class="a" style="left:403.8px;top:324.6px;width:9px;height:10.5px;background:#222A35"></div>
<div class="a" style="left:417.5px;top:269px;width:9px;height:9px;background:#4472C4;"></div>
<div class="a" style="left:417.5px;top:283.0px;width:9px;height:10.5px;background:#DAE3F3"></div>
<div class="a" style="left:417.5px;top:293.4px;width:9px;height:10.5px;background:#B4C7E7"></div>
<div class="a" style="left:417.5px;top:303.8px;width:9px;height:10.5px;background:#8FAADC"></div>
<div class="a" style="left:417.5px;top:314.2px;width:9px;height:10.5px;background:#2F5597"></div>
<div class="a" style="left:417.5px;top:324.6px;width:9px;height:10.5px;background:#203864"></div>
<div class="a" style="left:431.2px;top:269px;width:9px;height:9px;background:#ED7D31;"></div>
<div class="a" style="left:431.2px;top:283.0px;width:9px;height:10.5px;background:#FBE5D6"></div>
<div class="a" style="left:431.2px;top:293.4px;width:9px;height:10.5px;background:#F8CBAD"></div>
<div class="a" style="left:431.2px;top:303.8px;width:9px;height:10.5px;background:#F4B183"></div>
<div class="a" style="left:431.2px;top:314.2px;width:9px;height:10.5px;background:#C55A11"></div>
<div class="a" style="left:431.2px;top:324.6px;width:9px;height:10.5px;background:#843C0C"></div>
<div class="a" style="left:445.0px;top:269px;width:9px;height:9px;background:#A5A5A5;"></div>
<div class="a" style="left:445.0px;top:283.0px;width:9px;height:10.5px;background:#EDEDED"></div>
<div class="a" style="left:445.0px;top:293.4px;width:9px;height:10.5px;background:#DBDBDB"></div>
<div class="a" style="left:445.0px;top:303.8px;width:9px;height:10.5px;background:#C9C9C9"></div>
<div class="a" style="left:445.0px;top:314.2px;width:9px;height:10.5px;background:#7B7B7B"></div>
<div class="a" style="left:445.0px;top:324.6px;width:9px;height:10.5px;background:#525252"></div>
<div class="a" style="left:458.8px;top:269px;width:9px;height:9px;background:#FFC000;"></div>
<div class="a" style="left:458.8px;top:283.0px;width:9px;height:10.5px;background:#FFF2CC"></div>
<div class="a" style="left:458.8px;top:293.4px;width:9px;height:10.5px;background:#FFE699"></div>
<div class="a" style="left:458.8px;top:303.8px;width:9px;height:10.5px;background:#FFD966"></div>
<div class="a" style="left:458.8px;top:314.2px;width:9px;height:10.5px;background:#BF9000"></div>
<div class="a" style="left:458.8px;top:324.6px;width:9px;height:10.5px;background:#7F6000"></div>
<div class="a" style="left:472.5px;top:269px;width:9px;height:9px;background:#5B9BD5;"></div>
<div class="a" style="left:472.5px;top:283.0px;width:9px;height:10.5px;background:#DEEBF7"></div>
<div class="a" style="left:472.5px;top:293.4px;width:9px;height:10.5px;background:#BDD7EE"></div>
<div class="a" style="left:472.5px;top:303.8px;width:9px;height:10.5px;background:#9DC3E6"></div>
<div class="a" style="left:472.5px;top:314.2px;width:9px;height:10.5px;background:#2E75B6"></div>
<div class="a" style="left:472.5px;top:324.6px;width:9px;height:10.5px;background:#1F4E79"></div>
<div class="a" style="left:486.2px;top:269px;width:9px;height:9px;background:#70AD47;"></div>
<div class="a" style="left:486.2px;top:283.0px;width:9px;height:10.5px;background:#E2F0D9"></div>
<div class="a" style="left:486.2px;top:293.4px;width:9px;height:10.5px;background:#C5E0B4"></div>
<div class="a" style="left:486.2px;top:303.8px;width:9px;height:10.5px;background:#A9D18E"></div>
<div class="a" style="left:486.2px;top:314.2px;width:9px;height:10.5px;background:#548235"></div>
<div class="a" style="left:486.2px;top:324.6px;width:9px;height:10.5px;background:#385723"></div>
<div class="a" style="left:360px;top:339px;width:138px;height:19px;background:#ececec"></div>
<div class="t" style="left:367px;top:344px;font-size:10px;color:#555;-webkit-text-stroke:0.3px #555">标准色</div>
<div class="a" style="left:362.5px;top:361px;width:9px;height:9px;background:#C00000"></div>
<div class="a" style="left:376.2px;top:361px;width:9px;height:9px;background:#FF0000"></div>
<div class="a" style="left:390.0px;top:361px;width:9px;height:9px;background:#FFC000"></div>
<div class="a" style="left:403.8px;top:361px;width:9px;height:9px;background:#FFFF00"></div>
<div class="a" style="left:417.5px;top:361px;width:9px;height:9px;background:#92D050"></div>
<div class="a" style="left:431.2px;top:361px;width:9px;height:9px;background:#00B050"></div>
<div class="a" style="left:445.0px;top:361px;width:9px;height:9px;background:#00B0F0"></div>
<div class="a" style="left:458.8px;top:361px;width:9px;height:9px;background:#0070C0"></div>
<div class="a" style="left:472.5px;top:361px;width:9px;height:9px;background:#002060"></div>
<div class="a" style="left:486.2px;top:361px;width:9px;height:9px;background:#7030A0"></div>
<svg style="left:364px;top:377px" width="12" height="12" viewBox="0 0 12 12">
<path d="M6 6 L6 0 A6 6 0 0 1 11.2 3Z" fill="#e05a3a"/><path d="M6 6 L11.2 3 A6 6 0 0 1 11.2 9Z" fill="#6aa060"/><path d="M6 6 L11.2 9 A6 6 0 0 1 6 12Z" fill="#4a78b8"/><path d="M6 6 L6 12 A6 6 0 0 1 0.8 9Z" fill="#7a9ac8"/><path d="M6 6 L0.8 9 A6 6 0 0 1 0.8 3Z" fill="#e87a40"/><path d="M6 6 L0.8 3 A6 6 0 0 1 6 0Z" fill="#f0b060"/><circle cx="6" cy="6" r="1.2" fill="#fff"/></svg>
<div class="t" style="left:386px;top:379px;font-size:10px;color:#666">其他颜色(<u>M</u>)...</div>
<svg style="left:364px;top:398px" width="12" height="12" viewBox="0 0 12 12"><path d="M0.5 11.5 L1.2 9.5 L7 3.7 L8.3 5 L2.5 10.8 Z" fill="none" stroke="#777" stroke-width="0.9"/><path d="M6.5 3.2 L8.8 5.5 M8 2 L10 0.5 C11 0 12 1 11.5 2 L10 4" fill="#555" stroke="#555" stroke-width="1.6"/></svg>
<div class="t" style="left:386px;top:399px;font-size:10px;color:#666">取色器(<u>E</u>)</div>
<div class="a" style="left:614px;top:245.5px;width:58px;height:133px;background:#FDFDFD;border:1px solid #d6d6d6;"></div>
<div class="t" style="left:593px;top:387px;width:100px;text-align:center;font-size:14px;color:#595959;-webkit-text-stroke:0.15px #595959">背景1</div>
<div class="a" style="left:691px;top:245.5px;width:58px;height:133px;background:#000000;"></div>
<div class="t" style="left:670px;top:387px;width:100px;text-align:center;font-size:14px;color:#595959;-webkit-text-stroke:0.15px #595959">文字1</div>
<div class="a" style="left:766px;top:245.5px;width:58px;height:133px;background:#E6E6E6;"></div>
<div class="t" style="left:745px;top:387px;width:100px;text-align:center;font-size:14px;color:#595959;-webkit-text-stroke:0.15px #595959">背景2</div>
<div class="a" style="left:842px;top:245.5px;width:58px;height:133px;background:#44546A;"></div>
<div class="t" style="left:821px;top:387px;width:100px;text-align:center;font-size:14px;color:#595959;-webkit-text-stroke:0.15px #595959">文字2</div>
<div class="a" style="left:918px;top:245.5px;width:58px;height:133px;background:#4472C4;"></div>
<div class="t" style="left:897px;top:387px;width:100px;text-align:center;font-size:14px;color:#595959;-webkit-text-stroke:0.15px #595959">个性色1</div>
<div class="a" style="left:992.5px;top:245.5px;width:58px;height:133px;background:#ED7D31;"></div>
<div class="t" style="left:971.5px;top:387px;width:100px;text-align:center;font-size:14px;color:#595959;-webkit-text-stroke:0.15px #595959">个性色2</div>
<div class="a" style="left:1068.5px;top:245.5px;width:58px;height:133px;background:#A5A5A5;"></div>
<div class="t" style="left:1047.5px;top:387px;width:100px;text-align:center;font-size:14px;color:#595959;-webkit-text-stroke:0.15px #595959">个性色3</div>
<div class="a" style="left:1144px;top:245.5px;width:58px;height:133px;background:#FFC000;"></div>
<div class="t" style="left:1123px;top:387px;width:100px;text-align:center;font-size:14px;color:#595959;-webkit-text-stroke:0.15px #595959">个性色4</div>
<div class="a" style="left:1220px;top:245.5px;width:58px;height:133px;background:#5B9BD5;"></div>
<div class="t" style="left:1199px;top:387px;width:100px;text-align:center;font-size:14px;color:#595959;-webkit-text-stroke:0.15px #595959">个性色3</div>
<div class="a" style="left:1295px;top:245.5px;width:58px;height:133px;background:#70AD47;"></div>
<div class="t" style="left:1274px;top:387px;width:100px;text-align:center;font-size:14px;color:#595959;-webkit-text-stroke:0.15px #595959">个性色4</div>
<svg style="left:0;top:0" width="1478" height="845" viewBox="0 0 1478 845">
<path d="M562 437.5 H720.5 V419" fill="none" stroke="#000000" stroke-width="1.15"/>
<path d="M562 471.5 H644.5 V419" fill="none" stroke="#a8a8a8" stroke-width="1.0"/>
<path d="M562 503.5 H877.5 V419" fill="none" stroke="#5c6675" stroke-width="1.0"/>
<path d="M562 539.5 H795.5 V419" fill="none" stroke="#e6e6e6" stroke-width="1.0"/>
<path d="M562 570.5 H944.5 V419" fill="none" stroke="#4f74b8" stroke-width="1.0"/>
<path d="M562 606.5 H1022.5 V419" fill="none" stroke="#e08650" stroke-width="1.0"/>
<path d="M562 639.5 H1098.5 V419" fill="none" stroke="#a0a0a0" stroke-width="1.0"/>
<path d="M562 672.5 H1175.5 V419" fill="none" stroke="#f5c030" stroke-width="1.0"/>
<path d="M562 706.5 H1251.5 V419" fill="none" stroke="#5b8fc8" stroke-width="1.0"/>
<path d="M562 740.5 H1325.5 V419" fill="none" stroke="#6fa048" stroke-width="1.0"/>
</svg>
<div class="t" style="left:360px;top:431.5px;font-size:14px;color:#333;letter-spacing:0.3px;-webkit-text-stroke:0.12px #333">文字/背景 - 深色 1(<u>T</u>)</div>
<div class="a" style="left:509px;top:425.0px;width:53px;height:27px;background:#e1e1e1;border:1px solid #b4b4b4"></div>
<div class="a" style="left:514px;top:430.0px;width:24px;height:17px;background:#000000;border:1px solid #9aa3b3;box-shadow:inset 0 0 0 1px #f4f8fc"></div>
<div class="a" style="left:545px;top:435.0px;width:0;height:0;border-left:4.5px solid transparent;border-right:4.5px solid transparent;border-top:5px solid #000"></div>
<div class="t" style="left:360px;top:464.9px;font-size:14px;color:#333;letter-spacing:0.3px;-webkit-text-stroke:0.12px #333">文字/背景 - 浅色 1(<u>B</u>)</div>
<div class="a" style="left:509px;top:458.4px;width:53px;height:27px;background:#e1e1e1;border:1px solid #b4b4b4"></div>
<div class="a" style="left:514px;top:463.4px;width:24px;height:17px;background:#FFFFFF;border:1px solid #9aa3b3;box-shadow:inset 0 0 0 1px #f4f8fc"></div>
<div class="a" style="left:545px;top:468.4px;width:0;height:0;border-left:4.5px solid transparent;border-right:4.5px solid transparent;border-top:5px solid #000"></div>
<div class="t" style="left:360px;top:498.3px;font-size:14px;color:#333;letter-spacing:0.3px;-webkit-text-stroke:0.12px #333">文字/背景 - 深色 2(<u>D</u>)</div>
<div class="a" style="left:509px;top:491.9px;width:53px;height:27px;background:#e1e1e1;border:1px solid #b4b4b4"></div>
<div class="a" style="left:514px;top:496.9px;width:24px;height:17px;background:#44546A;border:1px solid #9aa3b3;box-shadow:inset 0 0 0 1px #f4f8fc"></div>
<div class="a" style="left:545px;top:501.9px;width:0;height:0;border-left:4.5px solid transparent;border-right:4.5px solid transparent;border-top:5px solid #000"></div>
<div class="t" style="left:360px;top:531.7px;font-size:14px;color:#333;letter-spacing:0.3px;-webkit-text-stroke:0.12px #333">文字/背景 - 浅色 2(<u>L</u>)</div>
<div class="a" style="left:509px;top:525.4px;width:53px;height:27px;background:#e1e1e1;border:1px solid #b4b4b4"></div>
<div class="a" style="left:514px;top:530.4px;width:24px;height:17px;background:#E7E6E6;border:1px solid #9aa3b3;box-shadow:inset 0 0 0 1px #f4f8fc"></div>
<div class="a" style="left:545px;top:535.4px;width:0;height:0;border-left:4.5px solid transparent;border-right:4.5px solid transparent;border-top:5px solid #000"></div>
<div class="t" style="left:360px;top:565.1px;font-size:14px;color:#333;letter-spacing:0.3px;-webkit-text-stroke:0.12px #333">着色 1(<u>1</u>)</div>
<div class="a" style="left:509px;top:558.8px;width:53px;height:27px;background:#e1e1e1;border:1px solid #b4b4b4"></div>
<div class="a" style="left:514px;top:563.8px;width:24px;height:17px;background:#4472C4;border:1px solid #9aa3b3;box-shadow:inset 0 0 0 1px #f4f8fc"></div>
<div class="a" style="left:545px;top:568.8px;width:0;height:0;border-left:4.5px solid transparent;border-right:4.5px solid transparent;border-top:5px solid #000"></div>
<div class="t" style="left:360px;top:598.5px;font-size:14px;color:#333;letter-spacing:0.3px;-webkit-text-stroke:0.12px #333">着色 2(<u>2</u>)</div>
<div class="a" style="left:509px;top:592.2px;width:53px;height:27px;background:#e1e1e1;border:1px solid #b4b4b4"></div>
<div class="a" style="left:514px;top:597.2px;width:24px;height:17px;background:#ED7D31;border:1px solid #9aa3b3;box-shadow:inset 0 0 0 1px #f4f8fc"></div>
<div class="a" style="left:545px;top:602.2px;width:0;height:0;border-left:4.5px solid transparent;border-right:4.5px solid transparent;border-top:5px solid #000"></div>
<div class="t" style="left:360px;top:631.9px;font-size:14px;color:#333;letter-spacing:0.3px;-webkit-text-stroke:0.12px #333">着色 3(<u>3</u>)</div>
<div class="a" style="left:509px;top:625.7px;width:53px;height:27px;background:#e1e1e1;border:1px solid #b4b4b4"></div>
<div class="a" style="left:514px;top:630.7px;width:24px;height:17px;background:#A5A5A5;border:1px solid #9aa3b3;box-shadow:inset 0 0 0 1px #f4f8fc"></div>
<div class="a" style="left:545px;top:635.7px;width:0;height:0;border-left:4.5px solid transparent;border-right:4.5px solid transparent;border-top:5px solid #000"></div>
<div class="t" style="left:360px;top:665.3px;font-size:14px;color:#333;letter-spacing:0.3px;-webkit-text-stroke:0.12px #333">着色 4(<u>4</u>)</div>
<div class="a" style="left:509px;top:659.2px;width:53px;height:27px;background:#e1e1e1;border:1px solid #b4b4b4"></div>
<div class="a" style="left:514px;top:664.2px;width:24px;height:17px;background:#FFC000;border:1px solid #9aa3b3;box-shadow:inset 0 0 0 1px #f4f8fc"></div>
<div class="a" style="left:545px;top:669.2px;width:0;height:0;border-left:4.5px solid transparent;border-right:4.5px solid transparent;border-top:5px solid #000"></div>
<div class="t" style="left:360px;top:698.7px;font-size:14px;color:#333;letter-spacing:0.3px;-webkit-text-stroke:0.12px #333">着色 5(<u>5</u>)</div>
<div class="a" style="left:509px;top:692.6px;width:53px;height:27px;background:#e1e1e1;border:1px solid #b4b4b4"></div>
<div class="a" style="left:514px;top:697.6px;width:24px;height:17px;background:#5B9BD5;border:1px solid #9aa3b3;box-shadow:inset 0 0 0 1px #f4f8fc"></div>
<div class="a" style="left:545px;top:702.6px;width:0;height:0;border-left:4.5px solid transparent;border-right:4.5px solid transparent;border-top:5px solid #000"></div>
<div class="t" style="left:360px;top:732.1px;font-size:14px;color:#333;letter-spacing:0.3px;-webkit-text-stroke:0.12px #333">着色 6(<u>6</u>)</div>
<div class="a" style="left:509px;top:726.0px;width:53px;height:27px;background:#e1e1e1;border:1px solid #b4b4b4"></div>
<div class="a" style="left:514px;top:731.0px;width:24px;height:17px;background:#70AD47;border:1px solid #9aa3b3;box-shadow:inset 0 0 0 1px #f4f8fc"></div>
<div class="a" style="left:545px;top:736.0px;width:0;height:0;border-left:4.5px solid transparent;border-right:4.5px solid transparent;border-top:5px solid #000"></div>
<div class="a" style="left:1464px;top:165px;width:14px;height:602px;background:#dedede"></div>
<div class="a" style="left:1464px;top:165px;width:14px;height:301px;background:#fdfdfd;border:1px solid #a6a6a6;border-right:none"></div>
<div class="a" style="left:1465px;top:179px;width:13px;height:1px;background:#a6a6a6"></div>
<div class="a" style="left:1468px;top:170px;width:0;height:0;border-left:3.5px solid transparent;border-right:3.5px solid transparent;border-bottom:4px solid #606060"></div>
<div class="a" style="left:1464px;top:752px;width:14px;height:15px;background:#fdfdfd;border:1px solid #a6a6a6;border-right:none"></div>
<div class="a" style="left:1468px;top:758px;width:0;height:0;border-left:3.5px solid transparent;border-right:3.5px solid transparent;border-top:4px solid #606060"></div>
<svg style="left:1467px;top:771px" width="9" height="9" viewBox="0 0 9 9"><path d="M1 4 L4.5 0.5 L8 4 Z M1 8.5 L4.5 5 L8 8.5 Z" fill="#606060"/></svg>
<svg style="left:1467px;top:789px" width="9" height="9" viewBox="0 0 9 9"><path d="M1 0.5 L4.5 4 L8 0.5 Z M1 5 L4.5 8.5 L8 5 Z" fill="#606060"/></svg>


<div class="a" style="left:224px;top:823px;width:1254px;height:1px;background:#c8c8c8"></div>
<div class="a" style="left:0;top:825px;width:1478px;height:1px;background:#dcdcdc"></div>
<div class="a" style="left:0;top:826px;width:1478px;height:19px;background:#f2f0f2"></div>
<div class="t" style="left:8px;top:829px;font-size:12px;color:#444;letter-spacing:0.25px;-webkit-text-stroke:0.2px #444">幻灯片 第 1 张，共 2 张</div>
<svg style="left:156px;top:829px" width="14" height="13" viewBox="0 0 14 13"><path d="M0.5 1 C2.5 0.5 4.5 0.5 6.5 1.5 V12 C4.5 11 2.5 11 0.5 11.5 Z M6.5 1.5 C8 0.8 9.5 0.6 11 0.8 M6.5 12 C7.5 11.5 8.5 11.2 9.5 11.2" fill="none" stroke="#666" stroke-width="0.9"/><path d="M8.5 6 L10 8 L13.5 3" fill="none" stroke="#666" stroke-width="1"/></svg>
<div class="t" style="left:188px;top:829px;font-size:12px;color:#444;-webkit-text-stroke:0.2px #444">中文(中国)</div>
<svg style="left:1055px;top:829px" width="12" height="12" viewBox="0 0 12 12"><path d="M3 3.5 L6 0.5 L9 3.5 Z" fill="#555"/><path d="M1 6.5 H11 M1 9 H11 M1 11.5 H8" stroke="#555" stroke-width="1"/></svg>
<div class="t" style="left:1072px;top:829px;font-size:12px;color:#333;-webkit-text-stroke:0.25px #333">备注</div>
<div class="a" style="left:1115px;top:826px;width:38px;height:19px;background:#c8c8c8"></div>
<svg style="left:1126px;top:829px" width="16" height="13" viewBox="0 0 16 13"><rect x="0.5" y="0.5" width="15" height="12" fill="none" stroke="#555"/><path d="M4.5 0.5 V12.5 M4.5 4 H13 V9 H4.5" fill="none" stroke="#555"/></svg>
<svg style="left:1164px;top:829px" width="15" height="13" viewBox="0 0 15 13"><rect x="0.5" y="0.5" width="5.5" height="5" fill="none" stroke="#555"/><rect x="9" y="0.5" width="5.5" height="5" fill="none" stroke="#555"/><rect x="0.5" y="7.5" width="5.5" height="5" fill="none" stroke="#555"/><rect x="9" y="7.5" width="5.5" height="5" fill="none" stroke="#555"/></svg>
<svg style="left:1202px;top:829px" width="15" height="14" viewBox="0 0 15 14"><path d="M7.5 2 C5.5 0.5 2.5 0.5 0.5 1 V12 C2.5 11.5 5.5 11.5 7.5 13 C9.5 11.5 12.5 11.5 14.5 12 V1 C12.5 0.5 9.5 0.5 7.5 2 V13" fill="none" stroke="#555"/><path d="M2.5 4 H5.5 M2.5 6.5 H5.5 M2.5 9 H5.5 M9.5 4 H12.5 M9.5 6.5 H12.5 M9.5 9 H12.5" stroke="#777"/></svg>
<svg style="left:1241px;top:829px" width="14" height="13" viewBox="0 0 14 13"><path d="M0 1 H14" stroke="#555" stroke-width="1.5"/><rect x="1.5" y="1.5" width="11" height="7" fill="none" stroke="#555"/><path d="M7 8.5 V12 M4 12.5 H10" stroke="#555"/></svg>
<div class="a" style="left:1273px;top:835px;width:6px;height:2px;background:#555"></div>
<div class="a" style="left:1282px;top:835.5px;width:100px;height:1px;background:#aaa"></div>
<div class="a" style="left:1331px;top:832px;width:1px;height:6px;background:#aaa"></div>
<div class="a" style="left:1324px;top:830px;width:5px;height:11px;background:#555"></div>
<svg style="left:1385px;top:832px" width="8" height="8" viewBox="0 0 8 8"><path d="M4 0 V8 M0 4 H8" stroke="#555" stroke-width="2"/></svg>
<div class="t" style="left:1404px;top:831px;font-size:12px;color:#333;-webkit-text-stroke:0.15px #333">88%</div>
<svg style="left:1450px;top:830px" width="13" height="12" viewBox="0 0 13 12"><rect x="0.5" y="0.5" width="12" height="11" fill="none" stroke="#555"/><path d="M6.5 2 V10 M2 6 H11 M5 3.5 L6.5 2 L8 3.5 M5 8.5 L6.5 10 L8 8.5 M3.5 4.5 L2 6 L3.5 7.5 M9.5 4.5 L11 6 L9.5 7.5" fill="none" stroke="#555" stroke-width="0.8"/></svg>

</body></html>
